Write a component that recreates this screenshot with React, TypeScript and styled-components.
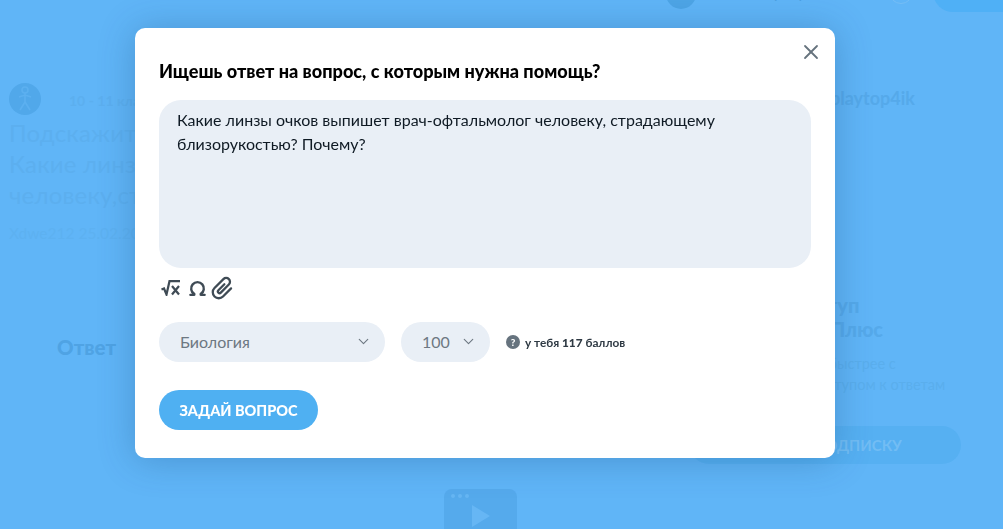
import styled, { createGlobalStyle } from "styled-components";
import { ChevronDown, Omega, X } from "lucide-react";

const FONT = `Lato, "Open Sans", "Noto Sans", sans-serif`;

const GlobalStyle = createGlobalStyle`
  html, body {
    margin: 0;
    padding: 0;
    height: 100%;
    overflow: hidden;
    background: #60b5f7;
    font-family: ${FONT};
  }
  * { box-sizing: border-box; }
`;

export default function App() {
  return (
    <>
      <GlobalStyle />
      <Page>
        <Header>
          <HeaderAvatar />
          <HeaderLabel>Мой профиль</HeaderLabel>
          <HeaderDot />
          <HeaderButton />
        </Header>
        <Columns>
          <LeftColumn>
            <MetaRow>
              <Avatar>
                <svg width="18" height="26" viewBox="0 0 18 26" fill="none" stroke="#5cb0f0" strokeWidth="1.6">
                  <circle cx="9" cy="4" r="3" />
                  <path d="M9 7v9M3 11l6-2 6 2M9 16l-5 8M9 16l5 8" />
                </svg>
              </Avatar>
              <Grade>10 - 11 классы</Grade>
            </MetaRow>
            <Question>
              Подскажите
              <br />
              Какие линзы
              <br />
              человеку,страдающему
            </Question>
            <Byline>Xdwe212 25.02.2021</Byline>
            <AnswerTitle>Ответ</AnswerTitle>
            <VideoIcon>
              <svg width="73" height="40" viewBox="0 0 73 40">
                <path d="M8 0h57a8 8 0 0 1 8 8v32H0V8a8 8 0 0 1 8-8z" fill="#55aaec" />
                <circle cx="9" cy="7" r="2" fill="#66b6f4" />
                <circle cx="16" cy="7" r="2" fill="#66b6f4" />
                <circle cx="23" cy="7" r="2" fill="#66b6f4" />
                <path d="M28 16l18 11-18 11z" fill="#66b6f4" />
              </svg>
            </VideoIcon>
          </LeftColumn>
          <RightColumn>
            <UserName>playtop4ik</UserName>
            <PromoTitle>
              Получай доступ
              <br />
              со Знаниями Плюс
            </PromoTitle>
            <PromoText>
              Занимайся быстрее с
              <br />
              полным доступом к ответам
            </PromoText>
            <PromoButton>КУПИТЬ ПОДПИСКУ</PromoButton>
          </RightColumn>
        </Columns>
      </Page>

      <Overlay>
        <Modal>
          <CloseButton aria-label="Закрыть">
            <X size={24} strokeWidth={1.8} />
          </CloseButton>
          <Title>Ищешь ответ на вопрос, с которым нужна помощь?</Title>
          <QuestionBox>
            Какие линзы очков выпишет врач-офтальмолог человеку, страдающему
            близорукостью? Почему?
          </QuestionBox>
          <Tools>
            <svg width="20" height="16" viewBox="0 0 20 16" fill="none" stroke="#3f4b55" strokeWidth="2.2">
              <path d="M0.5 9.5L3 8.5 5.5 14.5 8.5 1.2h10.5" />
              <path d="M11 6l7 8.5M18 6l-7 8.5" />
            </svg>
            <Omega size={19} strokeWidth={3} color="#3f4b55" />
            <ClipIcon width="24" height="24" viewBox="0 1 19 20" fill="none" stroke="#3f4b55" strokeWidth="1.9" strokeLinecap="round">
              <g transform="rotate(45 9.5 11)">
                <path d="M14.5 6.5V16a5 5 0 0 1-10 0V5.5a3.2 3.2 0 0 1 6.4 0V15a1.4 1.4 0 0 1-2.8 0V8" />
              </g>
            </ClipIcon>
          </Tools>
          <Selects>
            <Select $width={226}>
              Биология
              <ChevronDown size={17} strokeWidth={1.6} />
            </Select>
            <Select $width={89}>
              100
              <ChevronDown size={17} strokeWidth={1.6} />
            </Select>
            <Points>
              <HelpBadge>?</HelpBadge>
              <span>
                у тебя <strong>117</strong> баллов
              </span>
            </Points>
          </Selects>
          <Submit>ЗАДАЙ ВОПРОС</Submit>
        </Modal>
      </Overlay>
    </>
  );
}

const Page = styled.div`
  height: 529px;
  overflow: hidden;
  background: #60b5f7;
`;
const Header = styled.header`
  display: flex;
  align-items: flex-end;
  height: 12px;
  padding-left: 666px;
  overflow: hidden;
`;
const HeaderAvatar = styled.div`
  flex: none;
  width: 30px;
  height: 30px;
  margin-bottom: 3px;
  border-radius: 50%;
  background: #4ea5e6;
`;
const HeaderLabel = styled.div`
  flex: none;
  width: 138px;
  margin: 0 0 11px 25px;
  font-size: 15px;
  line-height: 18px;
  letter-spacing: 2px;
  white-space: nowrap;
  color: #4a9fe0;
`;
const HeaderDot = styled.div`
  flex: none;
  width: 24px;
  height: 24px;
  margin: 0 0 8px 30px;
  border-radius: 50%;
  border: 1px solid #74bdf5;
`;
const HeaderButton = styled.div`
  flex: none;
  width: 120px;
  height: 40px;
  margin-left: 20px;
  border-radius: 20px;
  background: #4fb0f6;
`;
const Columns = styled.div`
  display: flex;
`;
const LeftColumn = styled.section`
  flex: none;
  width: 660px;
  padding: 71px 0 0 9px;
  color: #5cafef;
`;
const MetaRow = styled.div`
  display: flex;
  align-items: center;
  gap: 28px;
`;
const Avatar = styled.div`
  display: flex;
  align-items: center;
  justify-content: center;
  width: 32px;
  height: 32px;
  border-radius: 50%;
  background: #51a8ea;
`;
const Grade = styled.span`
  margin-top: 2px;
  font-size: 14px;
  font-weight: 700;
`;
const Question = styled.div`
  margin-top: 2px;
  font-size: 24px;
  letter-spacing: 0.2px;
  line-height: 31px;
  white-space: nowrap;
`;
const Byline = styled.div`
  margin-top: 14px;
  font-size: 15.5px;
  color: #5db1f1;
`;
const AnswerTitle = styled.div`
  margin: 93px 0 0 48px;
  font-size: 20.5px;
  font-weight: 900;
  color: #4fa3e4;
`;
const VideoIcon = styled.div`
  margin: 130px 0 0 435px;
  height: 40px;
`;
const RightColumn = styled.aside`
  flex: 1;
  min-width: 0;
  padding: 75px 42px 0 30px;
  color: #55a9ea;
`;
const UserName = styled.div`
  padding-left: 140px;
  font-size: 18px;
  font-weight: 700;
`;
const PromoTitle = styled.div`
  margin-top: 184px;
  padding-left: 17px;
  font-size: 20px;
  line-height: 24px;
  font-weight: 900;
  white-space: nowrap;
`;
const PromoText = styled.div`
  margin-top: 12px;
  padding-left: 63px;
  font-size: 14.5px;
  line-height: 21px;
  white-space: nowrap;
  color: #5aaeed;
`;
const PromoButton = styled.div`
  display: flex;
  align-items: center;
  justify-content: center;
  height: 38px;
  margin-top: 31px;
  border-radius: 19px;
  background: #56b0f2;
  color: #72bdf4;
  font-size: 15px;
  font-weight: 700;
`;
const Overlay = styled.div`
  position: fixed;
  inset: 0;
  display: flex;
  justify-content: center;
  align-items: flex-start;
  padding: 28px 33px 0 0;
`;
const Modal = styled.div`
  position: relative;
  width: 700px;
  height: 430px;
  padding: 32px 24px 0;
  border-radius: 10px;
  background: #fff;
  box-shadow: 0 2px 36px rgba(20, 70, 120, 0.3);
`;
const CloseButton = styled.button`
  position: absolute;
  top: 12px;
  right: 12px;
  display: flex;
  padding: 0;
  border: 0;
  background: none;
  color: #66737e;
`;
const Title = styled.h2`
  margin: 0;
  font-size: 18.1px;
  line-height: 22px;
  font-weight: 900;
  color: #000;
`;
const QuestionBox = styled.div`
  height: 168px;
  margin-top: 18px;
  padding: 8px 18px;
  border-radius: 22px;
  background: #e9eff6;
  font-size: 16px;
  line-height: 24px;
  color: #0f1a24;
`;
const Tools = styled.div`
  display: flex;
  align-items: center;
  gap: 7px;
  height: 22px;
  margin-top: 9px;
  padding-left: 2px;
`;
const ClipIcon = styled.svg`
  margin-left: -3px;
`;
const Selects = styled.div`
  display: flex;
  align-items: center;
  gap: 16px;
  margin-top: 23px;
`;
const Select = styled.div<{ $width: number }>`
  display: flex;
  align-items: center;
  justify-content: space-between;
  width: ${({ $width }) => $width}px;
  height: 40px;
  padding: 0 13px 1px 21px;
  border-radius: 20px;
  background: #e9eff6;
  font-size: 16px;
  color: #6d7882;
`;
const Points = styled.div`
  display: flex;
  align-items: center;
  gap: 5px;
  font-size: 11.8px;
  font-weight: 700;
  color: #2f3a44;
  strong {
    font-weight: 900;
  }
`;
const HelpBadge = styled.span`
  display: flex;
  align-items: center;
  justify-content: center;
  width: 14px;
  height: 14px;
  border-radius: 50%;
  background: #66737e;
  color: #fff;
  font-size: 10px;
  font-weight: 900;
`;
const Submit = styled.button`
  display: block;
  width: 159px;
  height: 40px;
  margin-top: 28px;
  padding: 0;
  border: 0;
  border-radius: 20px;
  background: #4fb0f2;
  color: #fff;
  font-family: ${FONT};
  font-size: 14.5px;
  font-weight: 900;
`;
